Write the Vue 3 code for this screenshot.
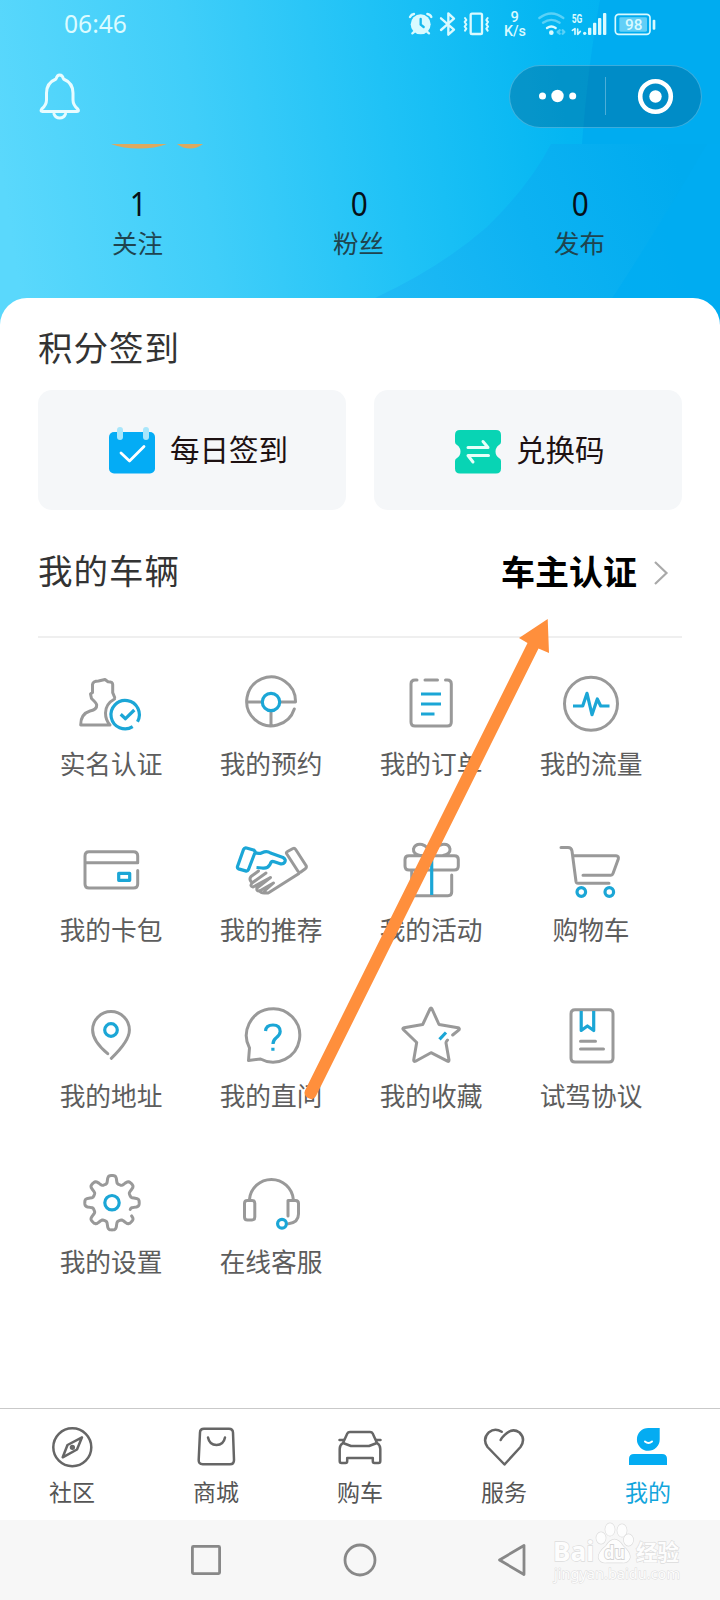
<script setup>
const stats = [
  { value: '1', label: '关注' },
  { value: '0', label: '粉丝' },
  { value: '0', label: '发布' },
]

// Wavy outline of the cog: eight teeth, left open at the lower right.
function cogPath(cx, cy) {
  const points = []
  for (let deg = 34; deg <= 381; deg += 2) {
    const a = (deg * Math.PI) / 180
    const r = 23.3 + 4 * Math.tanh(2.2 * Math.cos(8 * a))
    points.push(`${(cx + r * Math.cos(a)).toFixed(2)} ${(cy + r * Math.sin(a)).toFixed(2)}`)
  }
  return 'M' + points.join('L')
}

const services = [
  {
    label: '实名认证',
    grey: 'M39 59H9.7Q9.5 48 19 45Q26 43.500 25.700 39Q25.500 37 20.500 32.500L19.500 28L21.500 26.500V18.500Q22 15 27.500 15L34 13.500L37 15.700Q41.700 15.700 41.700 18.500V26.700L43.700 31.500M43.500 33Q34.500 38 34.500 47Q34.500 54 39 59',
    blue: 'M66.500 55.700A14.200 14.200 0 1 0 61.700 60.700M49.700 48.300L54.500 52.700L63.300 44',
  },
  {
    label: '我的预约',
    grey: 'M63.300 43A24.400 24.400 0 1 1 64.500 36H49M31 36H16M40 45V60',
    blue: 'M48.700 36A8.700 8.700 0 1 1 31.300 36A8.700 8.700 0 1 1 48.700 36Z',
  },
  {
    label: '我的订单',
    grey: 'M26 14H24Q20 14 20 18V56Q20 60 24 60H56.300Q60.300 60 60.300 56V18Q60.300 14 56.300 14H54.500M34 14H46.500',
    blue: 'M30 28H50M30 38H50M30 48H43.500',
  },
  {
    label: '我的流量',
    grey: 'M66.500 37.700A26.500 26.500 0 1 1 13.500 37.700A26.500 26.500 0 1 1 66.500 37.700Z',
    blue: 'M22 40H31.700L36 27.300L41 48.700L46.300 33L49.700 40H58.500',
  },
  {
    label: '我的卡包',
    grey: 'M14 30.700H66.700V24Q66.700 19.700 62.500 19.700H18Q14 19.700 14 24V52Q14 56 18 56H62.500Q66.700 56 66.700 52V38.500',
    blue: 'M47.700 41.300H58.700V48.300H47.700Z',
  },
  {
    label: '我的推荐',
    grey: 'M56.500 19.500L62 16.500Q63.600 15.800 64.700 17.500L75 33.500Q76 35.500 74.300 36.700L69.500 40.200Q68 41 66.800 39L55.500 21.500Q55 20.300 56.500 19.500ZM68 41.500L38 60.500Q35.500 62 33.700 59.500M27.500 39L20 44.500Q18 47 20 49.500M35 41L21 51Q18.500 54.500 22 55L39.500 45.500L26 56Q25 59.500 29 58.800L42.500 51L34 58.500M34.500 61Q30 61.500 28.500 58.800',
    blue: 'M15.500 16L22.500 18Q24.500 19 24 20.500L17.500 37.500Q16.500 39.500 14.500 38.900L7.500 36.900Q6 36 6.500 34.500L12.500 17.500Q13.500 15.500 15.500 16ZM23.500 19.800Q27 22.500 31 20.700Q36 18.500 39.500 21L52 25.500Q55.500 27.500 53.500 30.500Q52 32.700 48.500 31.500L42.500 29.500Q40 29 39 32.500Q36.500 37 31 36L25.500 35.500',
  },
  {
    label: '我的活动',
    grey: 'M18 23.700H63.300Q67.300 23.700 67.300 27.500V34Q67.300 38 63.300 38H18Q14 38 14 34V27.500Q14 23.700 18 23.700ZM20.700 38V60Q20.700 63.700 24 63.700H57Q60.700 63.700 60.700 60V43M40.500 23.500H29Q22 22 22.500 17Q24 11.500 31 12.500Q36.500 14 40.500 22Q44.500 14 51 12.500Q58 11.500 59 17Q59.500 22 52 23.500',
    blue: 'M40.700 25V63',
  },
  {
    label: '购物车',
    grey: 'M10 15.500H17Q20.500 15.500 21 19L25 49.500Q25.300 51.300 27 51.300H58M22.300 23.700H65Q68 24 67.300 27L62 41.500Q61.300 43.300 60 43.300H32',
    blue: 'M34.600 60A4.300 4.300 0 1 1 26 60A4.300 4.300 0 1 1 34.600 60ZM62.600 60A4.300 4.300 0 1 1 54 60A4.300 4.300 0 1 1 62.600 60Z',
  },
  {
    label: '我的地址',
    grey: 'M36.700 55.700Q21.600 43 21.600 32A18.400 18.400 0 0 1 58.400 32Q58.400 43 40.300 60.300',
    blue: 'M46.300 32A6.300 6.300 0 1 1 33.700 32A6.300 6.300 0 1 1 46.300 32Z',
  },
  {
    label: '我的直问',
    grey: 'M18.500 50A26.700 26.700 0 1 1 29.500 61L17.500 62.500Z',
    blue: 'M34.500 33Q35 27 42 27Q49 27 49.200 33.500Q49 37 45 40Q42 42.500 42 46M41.900 49.800V52.800',
  },
  {
    label: '我的收藏',
    grey: 'M61.700 37L68 31.800Q69 30.300 67 29.800L48 26.500L41 11Q40 9 39 11L31.700 26.500L13 29.800Q11 30.300 12.500 31.800L25.700 44.500L22.700 62Q22.700 64 24.500 63.200L40 54.700L56.500 63.200Q58 64 58 62L55 45Q54.900 43.800 56.500 42',
    blue: 'M48.500 41.300L55 34.500',
  },
  {
    label: '试驾协议',
    grey: 'M24 11.700H58Q62 11.700 62 15.700V60Q62 64 58 64H24Q20 64 20 60V15.700Q20 11.700 24 11.700ZM29.500 43.300H44.500M29.500 51H52.500',
    blue: 'M30.200 13V32.500L36.400 28L42.700 32.500V13',
  },
  {
    label: '我的设置',
    grey: cogPath(41, 38.700),
    blue: 'M48.200 38.700A7.200 7.200 0 1 1 33.800 38.700A7.200 7.200 0 1 1 48.200 38.700Z',
  },
  {
    label: '在线客服',
    grey: 'M18.500 36V35.300A22 22 0 0 1 62.300 35.300V36M16.500 36.500H21Q23.800 36.500 23.800 39.300V53Q23.800 56 21 56H16.500Q13.500 56 13.500 53V39.300Q13.500 36.500 16.500 36.500ZM57 52V36.500H64.500Q67.500 36.500 67.500 39.500V50Q67.500 58.500 57.500 59.700',
    blue: 'M55.400 59.700A4.400 4.400 0 1 1 46.600 59.700A4.400 4.400 0 1 1 55.400 59.700Z',
  },
]

const tabs = [
  { label: '社区', path: 'M41.300 22.300A19 19 0 1 1 3.300 22.300A19 19 0 1 1 41.300 22.300ZM32 12.300L17.500 20L12.700 32.300L27 24.500ZM23.800 22.300A1.400 1.400 0 1 1 21 22.300A1.400 1.400 0 1 1 23.800 22.300Z' },
  { label: '商城', path: 'M10 3.700H35Q38.800 3.700 39 7.500L40 35Q40 39.300 36 39.300H8.700Q4.500 39.300 4.700 35L6 7.500Q6 3.700 10 3.700ZM14 12.500Q15.500 20 22.500 20Q29.500 20 31 12.500' },
  { label: '购车', path: 'M5 18L9.300 8.500Q10 7 12 7H32Q34 7 34.700 8.500L39 18M1.500 15H5.500M42.500 15H38.500M5 18Q1.700 20 1.700 24V36Q1.700 38 3.500 38H7.500Q9.200 38 9.200 36V33H34.800V36Q34.800 38 36.500 38H40.500Q42.300 38 42.300 36V24Q42.300 20 39 18M5 18L13 21H31L39 18' },
  { label: '服务', path: 'M19.700 6.800Q13 2.500 7 7.200Q0 14 5.500 22L22.500 39.500L38.500 22Q44 14 37.500 7.500Q31 3 25 8Q20 12 18.700 15' },
  { label: '我的', active: true },
]
</script>

<template>
  <main class="screen">
    <header class="hero">
      <svg class="hero-art" width="720" height="330" viewBox="0 0 720 330">
        <defs>
          <linearGradient id="sky" gradientUnits="userSpaceOnUse" x1="0" y1="165" x2="700" y2="60">
            <stop offset="0" stop-color="#5ad8fc" />
            <stop offset="0.28" stop-color="#40cef9" />
            <stop offset="0.55" stop-color="#1fc2f6" />
            <stop offset="0.8" stop-color="#04b6f2" />
            <stop offset="1" stop-color="#00aef1" />
          </linearGradient>
          <linearGradient id="wave" gradientUnits="userSpaceOnUse" x1="380" y1="298" x2="680" y2="170">
            <stop offset="0" stop-color="#20baf5" />
            <stop offset="0.5" stop-color="#0db2f2" />
            <stop offset="1" stop-color="#00abef" />
          </linearGradient>
        </defs>
        <rect width="720" height="330" fill="url(#sky)" />
        <path d="M600 0H720V144H582Q588 65 600 0Z" fill="#00acf0" />
        <path d="M551 144H720V330H320Q377 297 377 297Q441 267 487 227Q530 185 551 144Z" fill="url(#wave)" />
        <path d="M707 144H720V330H590Q613 297 613 297Q660 225 707 144Z" fill="#00acf1" opacity="0.75" />
        <path d="M111 144H167Q155 148.500 139 148.500Q123 148.500 111 144ZM177 144H203Q197 148.500 190 148.500Q183 148.500 177 144Z" fill="#dca95f" />
      </svg>

      <div class="status">
        <time class="clock">06:46</time>
        <svg class="status-icons" width="250" height="27" viewBox="140 30 750 81">
          <g fill="#d9faff" stroke="none">
            <circle cx="181" cy="73" r="30" />
            <circle cx="673" cy="100" r="5" />
            <circle cx="573" cy="98" r="7" />
            <rect x="683" y="83" width="10" height="22" rx="3" />
            <rect x="698" y="68" width="10" height="37" rx="3" />
            <rect x="713" y="54" width="10" height="51" rx="3" />
            <rect x="728" y="39" width="10" height="66" rx="3" />
            <rect x="877" y="59" width="8" height="30" rx="3" />
            <rect x="777" y="52" width="83" height="43" rx="4" opacity="0.45" />
          </g>
          <g fill="none" stroke="#d9faff" stroke-width="7" stroke-linecap="round" stroke-linejoin="round">
            <path d="M149 51Q153 43 161 42M201 42Q210 43 213 51M161 96L156 100M201 96L206 100" />
            <path d="M181 57V74L190 81" stroke="#16b8ed" />
            <path d="M242 55L281 89L264 104V40L281 56L242 90" />
            <rect x="331" y="41" width="34" height="61" rx="4" />
            <path d="M314 54L318 60L313 66L318 73L313 80L318 86L314 92M382 54L378 60L383 66L378 73L383 80L378 86L382 92" stroke-width="6" />
            <path d="M560 84Q573 75 586 84" />
            <path d="M548 68Q573 51 598 68M537 54Q573 27 609 54M598 91L592 96L598 101M607 91L612 96L607 101" opacity="0.4" />
            <path d="M636 91L644 86V103M652 87V103L660 94" stroke-width="5" />
            <rect x="765" y="43" width="104" height="60" rx="10" stroke-width="5" />
          </g>
          <g class="status-text" fill="#d9faff">
            <text x="463" y="66" font-size="44" font-weight="500" text-anchor="middle">9</text>
            <text x="464" y="108" font-size="42" font-weight="500" textLength="66" lengthAdjust="spacingAndGlyphs" text-anchor="middle">K/s</text>
            <text x="634" y="68" font-size="38" font-weight="700" textLength="32" lengthAdjust="spacingAndGlyphs">5G</text>
            <text x="820" y="90" font-size="46" font-weight="500" text-anchor="middle">98</text>
          </g>
        </svg>
      </div>

      <div class="toolbar">
        <svg width="44" height="50" viewBox="0 0 44 50" fill="none" stroke="#e8fcff" stroke-width="3" stroke-linejoin="round" stroke-linecap="round">
          <path d="M18 8Q19 4 21.700 4Q24.500 4 25.500 8Q35 12 35 22V29Q35 34 39.700 38Q41.500 40.500 39 40.500H4.500Q2 40.500 3.700 38Q8.500 34 8.500 29V22Q8.500 12 18 8Z" />
          <path d="M16 43Q17.500 47 21.700 47Q26 47 27.500 43" />
        </svg>
        <div class="capsule">
          <svg width="95" height="62" viewBox="0 0 95 62" fill="#fff">
            <circle cx="32.500" cy="31" r="3.500" />
            <circle cx="47.500" cy="31" r="6.200" />
            <circle cx="62.700" cy="31" r="3.500" />
          </svg>
          <i class="capsule-line"></i>
          <svg width="95" height="62" viewBox="0 0 95 62">
            <circle cx="49.500" cy="31.500" r="15.300" fill="none" stroke="#fff" stroke-width="4.600" />
            <circle cx="49.500" cy="31.500" r="6.200" fill="#fff" />
          </svg>
        </div>
      </div>

      <div class="stats">
        <div v-for="item in stats" :key="item.label" class="stat">
          <strong>{{ item.value }}</strong>
          <span>{{ item.label }}</span>
        </div>
      </div>
    </header>

    <section class="sheet">
      <h2 class="title">积分签到</h2>
      <div class="cards">
        <button class="card checkin">
          <svg width="46" height="48" viewBox="0 0 46 48">
            <rect y="6" width="46" height="41.500" rx="5" fill="#04acf5" />
            <rect x="8" y="1" width="6" height="13" rx="3" fill="#a8e6fb" />
            <rect x="34" y="1" width="6" height="13" rx="3" fill="#a8e6fb" />
            <path d="M12 27L20.500 35L35 20.500" fill="none" stroke="#fff" stroke-width="2.800" stroke-linecap="round" stroke-linejoin="round" />
          </svg>
          <span>每日签到</span>
        </button>
        <button class="card redeem">
          <svg width="46" height="48" viewBox="0 0 46 48">
            <path d="M5 4H41Q46 4 46 9V16Q46 18 44 19Q40.500 21.500 40.500 25.500Q40.500 29.500 44 32Q46 33 46 35V42.500Q46 47.500 41 47.500H5Q0 47.500 0 42.500V35Q0 33 2 32Q5.500 29.500 5.500 25.500Q5.500 21.500 2 19Q0 18 0 16V9Q0 4 5 4Z" fill="#08d4b4" />
            <path d="M13 21.500H33L28 15.500M33.500 29.500H13L18 36" fill="none" stroke="#e6fff9" stroke-width="3" stroke-linecap="round" stroke-linejoin="round" />
          </svg>
          <span>兑换码</span>
        </button>
      </div>

      <div class="vehicle">
        <h2 class="title">我的车辆</h2>
        <a class="verify">
          车主认证
          <svg width="16" height="26" viewBox="0 0 16 26" fill="none" stroke="#a9a9a9" stroke-width="2.200">
            <path d="M2 2L13.500 13L2 24" />
          </svg>
        </a>
      </div>

      <div class="services">
        <a v-for="item in services" :key="item.label" class="service">
          <svg width="80" height="72" viewBox="0 0 80 72" fill="none" stroke-width="3" stroke-linejoin="round" stroke-linecap="round">
            <path :d="item.grey" stroke="#999" />
            <path :d="item.blue" stroke="#1ba6d6" stroke-width="3.200" stroke-linecap="butt" />
          </svg>
          <span>{{ item.label }}</span>
        </a>
      </div>
    </section>

    <nav class="tabs">
      <a v-for="tab in tabs" :key="tab.label" class="tab" :class="{ active: tab.active }">
        <svg width="44" height="44" viewBox="0 0 44 44">
          <g v-if="tab.active">
            <path d="M22.300 3H33.700V14.500A11.400 11.400 0 1 1 22.300 3Z" fill="#04acf2" />
            <path d="M3 40V34Q3 29 8 29H36Q41 29 41 34V40Z" fill="#04acf2" />
            <path d="M19 16.500Q22.500 19.500 26 16.500" fill="none" stroke="#fff" stroke-width="2" stroke-linecap="round" />
          </g>
          <path v-else :d="tab.path" fill="none" stroke="#666" stroke-width="2.500" stroke-linecap="round" stroke-linejoin="round" />
        </svg>
        <span>{{ tab.label }}</span>
      </a>
    </nav>

    <footer class="system">
      <svg class="keys" width="340" height="34" viewBox="0 0 340 34" fill="none" stroke="#888" stroke-width="2.800" stroke-linejoin="round">
        <rect x="4.400" y="3.400" width="27.200" height="27.200" rx="1" />
        <circle cx="172" cy="17" r="15" />
        <path d="M311.500 17L336 2.500V31.500Z" />
      </svg>
      <svg class="watermark" width="132" height="80" viewBox="0 0 132 80" stroke="#dcdcdc" stroke-width="1.300" paint-order="stroke">
        <g fill="#fdfdfd">
          <ellipse cx="49" cy="18" rx="4.700" ry="5.800" />
          <ellipse cx="58" cy="9.500" rx="4.700" ry="6.300" />
          <ellipse cx="70" cy="10.500" rx="4.700" ry="6.300" />
          <ellipse cx="76.500" cy="20" rx="4.700" ry="5.800" />
          <path d="M62.500 19.500Q67 19.500 71 26Q78 32 78 37.500Q76 43.500 70 42.500H55Q48 43.500 46.500 37.500Q46.500 32 54 26Q58 19.500 62.500 19.500Z" />
          <text x="1" y="41" font-size="27" font-weight="700" textLength="41" lengthAdjust="spacingAndGlyphs">Bai</text>
          <text x="84" y="40" font-size="22" font-weight="700" textLength="43" lengthAdjust="spacingAndGlyphs">经验</text>
          <text x="2" y="58.500" font-size="15" textLength="126" lengthAdjust="spacingAndGlyphs" stroke-width="1">jingyan.baidu.com</text>
        </g>
        <text x="52" y="39" font-size="18" font-weight="700" fill="#fdfdfd" stroke="#d4d4d4" stroke-width="1.800" textLength="21" lengthAdjust="spacingAndGlyphs">du</text>
      </svg>
    </footer>

    <svg class="pointer" width="250" height="485" viewBox="302 617 250 485">
      <path d="M547.700 619L549 653L538.500 648.500L316 1096Q313.500 1101 308 1098Q303.500 1095 305 1090.500L527.500 643L519 638Z" fill="#ff8f3c" />
    </svg>
  </main>
</template>

<style>
body {
  background: #fff;
}
</style>

<style scoped>
.screen {
  position: relative;
  display: flex;
  flex-direction: column;
  width: 720px;
  height: 1600px;
  overflow: hidden;
  background: #fff;
  font-family: "KaiTi", "Noto Sans CJK SC", sans-serif;
}
svg {
  display: block;
  flex: none;
}
.hero {
  position: relative;
  height: 298px;
  flex: none;
}
.hero-art {
  position: absolute;
  left: 0;
  top: 0;
}
.status {
  position: relative;
  display: flex;
  align-items: flex-start;
  justify-content: space-between;
  height: 64px;
  padding: 10px 63px 0 64px;
  box-sizing: border-box;
}
.clock {
  font: 24.6px/28px "Noto Sans", sans-serif;
  color: #dcfbff;
}
.status-text {
  font-family: Roboto, sans-serif;
}
.status-icons {
  overflow: visible;
}
.toolbar {
  position: relative;
  display: flex;
  align-items: center;
  justify-content: space-between;
  height: 64px;
  padding: 0 18px 0 38px;
}
.capsule {
  display: flex;
  align-items: center;
  box-sizing: border-box;
  width: 193px;
  height: 63px;
  border: 1px solid rgba(150, 220, 250, 0.4);
  border-radius: 32px;
  background: rgba(0, 70, 110, 0.31);
}
.capsule-line {
  width: 1px;
  height: 38px;
  background: rgba(255, 255, 255, 0.3);
}
.stats {
  position: relative;
  display: grid;
  grid-template-columns: repeat(3, 221px);
  margin: 56px 0 0 27px;
}
.stat {
  display: flex;
  flex-direction: column;
  align-items: center;
}
.stat strong {
  padding-left: 2px;
  font: 400 33px/40px "Noto Sans", sans-serif;
  color: #061018;
  transform: scaleX(0.9);
}
.stat span {
  font-size: 25.5px;
  line-height: 36px;
  color: #1f444f;
}
.sheet {
  position: relative;
  height: 1110px;
  flex: none;
  box-sizing: border-box;
  padding: 26px 38px 0;
  border-radius: 27px 27px 0 0;
  background: #fff;
}
.title {
  margin: 0;
  font-size: 34.500px;
  line-height: 44px;
  font-weight: 400;
  letter-spacing: 1px;
  color: #333;
}
.cards {
  display: grid;
  grid-template-columns: 1fr 1fr;
  gap: 28px;
  margin-top: 22px;
}
.card {
  display: flex;
  align-items: center;
  justify-content: flex-start;
  gap: 15px;
  height: 120px;
  padding: 0;
  border: 0;
  border-radius: 14px;
  background: #f5f7f9;
  font: inherit;
  font-size: 29.500px;
  line-height: 40px;
  color: #1d1112;
}
.checkin {
  padding-left: 71px;
}
.redeem {
  padding-left: 81px;
}
.card span {
  padding-bottom: 4px;
}
.vehicle {
  display: flex;
  align-items: center;
  justify-content: space-between;
  height: 128px;
  padding: 0 13px 5px 0;
  box-sizing: border-box;
  border-bottom: 2px solid #efefef;
}
.vehicle .title {
  padding-bottom: 4px;
}
.verify {
  display: flex;
  align-items: center;
  gap: 16px;
  margin-right: -1px;
  padding-right: 1px;
  font-size: 34px;
  line-height: 44px;
  font-weight: 700;
  color: #000;
}
.verify svg {
  margin: 4px 0 0 0;
}
.services {
  display: grid;
  grid-template-columns: repeat(4, 160px);
  grid-auto-rows: 166px;
  margin: 28px 0 0 -7px;
}
.service {
  display: flex;
  flex-direction: column;
  align-items: center;
  gap: 10px;
}
.service span {
  font-size: 25.700px;
  line-height: 30px;
  color: #5d5d5d;
}
.tabs {
  display: grid;
  grid-template-columns: repeat(5, 144px);
  box-sizing: border-box;
  height: 112px;
  flex: none;
  border-top: 1px solid #c9c9c9;
  background: #fff;
}
.tab {
  display: flex;
  flex-direction: column;
  align-items: center;
  padding-top: 16px;
  gap: 7px;
}
.tab span {
  font-size: 23px;
  line-height: 30px;
  color: #555;
}
.tab.active span {
  color: #12a5dc;
}
.system {
  display: flex;
  align-items: center;
  height: 80px;
  flex: none;
  background: #f7f7f7;
}
.keys {
  margin-left: 188px;
}
.watermark {
  margin-left: 24px;
  font-family: "Noto Sans", "Noto Sans CJK SC", sans-serif;
}
.pointer {
  position: absolute;
  left: 302px;
  top: 617px;
}
</style>
